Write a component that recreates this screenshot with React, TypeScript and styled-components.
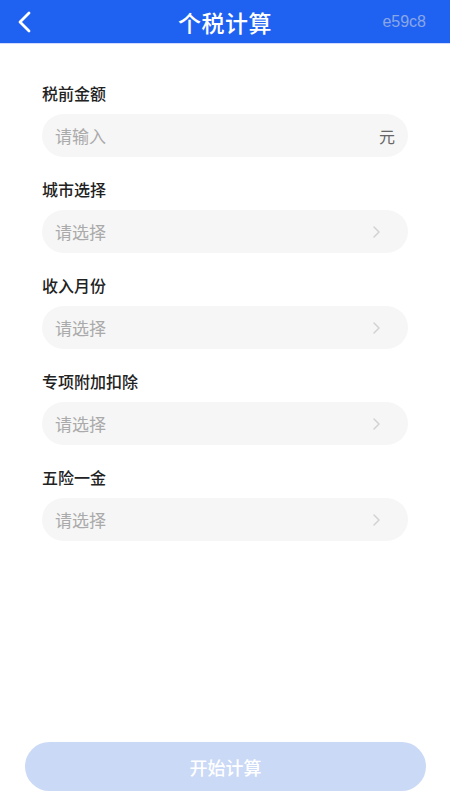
import type { FC } from "react";
import styled, { createGlobalStyle } from "styled-components";

const GlobalStyle = createGlobalStyle`
  html, body { margin: 0; padding: 0; background: #fff; }
  body { font-family: "Noto Sans CJK SC", "Noto Sans", sans-serif; }
  #root { min-height: 800px; }
`;

const Page = styled.div`
  width: 450px;
  height: 800px;
  display: flex;
  flex-direction: column;
  background: #fff;
`;

const Header = styled.header`
  height: 44px;
  background: #1f62f2;
  display: grid;
  grid-template-columns: 90px 1fr 90px;
  align-items: center;
  color: #fff;
  border-bottom: 1px solid #cfdcff;
  box-sizing: border-box;
`;

const BackButton = styled.div`
  display: flex;
  align-items: center;
  padding-left: 16px;
`;

const Title = styled.h1`
  margin: 0;
  text-align: center;
  font-size: 23px;
  font-weight: 500;
  letter-spacing: 0.5px;
`;

const Code = styled.span`
  text-align: right;
  padding-right: 24px;
  font-family: "Liberation Sans", Arial, sans-serif;
  font-size: 16px;
  color: #8aa6e6;
`;

const Form = styled.div`
  flex: 1;
  display: flex;
  flex-direction: column;
  gap: 21px;
  padding: 38px 42px 0 42px;
`;

const Field = styled.div`
  display: flex;
  flex-direction: column;
  gap: 10px;
`;

const Label = styled.div`
  font-size: 16px;
  font-weight: 500;
  color: #222;
  line-height: 22px;
  height: 22px;
`;

const Box = styled.div`
  height: 43px;
  border-radius: 22px;
  background: #f6f6f6;
  display: flex;
  align-items: center;
  justify-content: space-between;
  padding: 0 13px 0 13px;
`;

const Placeholder = styled.span`
  font-size: 17px;
  color: #aaa;
`;

const Unit = styled.span`
  font-size: 16px;
  color: #666;
`;

const Footer = styled.div`
  padding: 0 24px 9px 25px;
`;

const Submit = styled.button`
  width: 100%;
  height: 49px;
  border: none;
  border-radius: 25px;
  background: #cad9f6;
  color: #fff;
  font-family: inherit;
  font-size: 18px;
  font-weight: 500;
`;

const Chevron: FC = () => (
    <svg width="10" height="14" viewBox="0 0 10 14" style={{ marginRight: 14 }}>
        <path d="M3 2 L8 7 L3 12" fill="none" stroke="#d2d2d2" strokeWidth="1.5" strokeLinecap="round" strokeLinejoin="round" />
    </svg>
);

const selects = ["城市选择", "收入月份", "专项附加扣除", "五险一金"];

const App: FC = () => (
    <Page>
        <GlobalStyle />
        <Header>
            <BackButton>
                <svg width="18" height="24" viewBox="0 0 18 24">
                    <path d="M13 3 L4 12 L13 21" fill="none" stroke="#fff" strokeWidth="2.8" strokeLinecap="round" strokeLinejoin="round" />
                </svg>
            </BackButton>
            <Title>个税计算</Title>
            <Code>e59c8</Code>
        </Header>
        <Form>
            <Field>
                <Label>税前金额</Label>
                <Box>
                    <Placeholder>请输入</Placeholder>
                    <Unit>元</Unit>
                </Box>
            </Field>
            { selects.map(label => (
                <Field key={label}>
                    <Label>{label}</Label>
                    <Box>
                        <Placeholder>请选择</Placeholder>
                        <Chevron />
                    </Box>
                </Field>
            )) }
        </Form>
        <Footer>
            <Submit>开始计算</Submit>
        </Footer>
    </Page>
);

export default App;
